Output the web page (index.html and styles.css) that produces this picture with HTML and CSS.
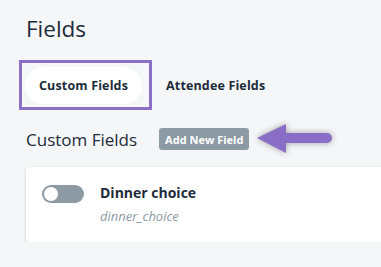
FILE: index.html
```html
<!DOCTYPE html>
<html lang="en">
<head>
    <meta charset="UTF-8">
    <title>Fields</title>
    <link rel="stylesheet" href="styles.css">
</head>
<body>
    <div class="page">
        <h1 class="title">Fields</h1>

        <div class="tabs">
            <div class="tab-outline">
                <div class="tab active">Custom Fields</div>
            </div>
            <div class="tab">Attendee Fields</div>
        </div>

        <div class="section-head">
            <h2>Custom Fields</h2>
            <button class="add-btn">Add New Field</button>
            <svg class="arrow" width="84" height="40" viewBox="0 0 84 40">
                <path d="M4 19 L33 5 L33 14 L74 14 A5 5 0 0 1 74 24 L33 24 L33 34 Z" fill="#8a6dc6"/>
            </svg>
        </div>

        <div class="card">
            <span class="toggle"><span class="knob"></span></span>
            <div class="field-info">
                <div class="field-name">Dinner choice</div>
                <div class="field-key">dinner_choice</div>
            </div>
        </div>
    </div>
</body>
</html>
```

FILE: styles.css
```css
body {
    margin: 0;
    background: #f5f6f8;
    font-family: "Open Sans", sans-serif;
    color: #1d2b3a;
}
.page {
    padding: 14px 0 0 26px;
}
.title {
    margin: 0;
    font-size: 22.5px;
    font-weight: 400;
    line-height: 30px;
}
.tabs {
    display: flex;
    align-items: center;
    margin: 16px 0 0 -7px;
}
.tab-outline {
    border: 3px solid #8b6fc6;
    padding: 4px 7px 3px 3px;
}
.tab {
    font-size: 12.5px;
    font-weight: 700;
    letter-spacing: 0.15px;
    padding: 0 14px;
    height: 37px;
    line-height: 37px;
    border-radius: 19px;
}
.tab.active {
    background: #fff;
}
.section-head {
    display: flex;
    align-items: center;
    margin-top: 16px;
    height: 26px;
}
.section-head h2 {
    margin: 0;
    font-size: 17px;
    font-weight: 400;
}
.add-btn {
    margin-left: 22px;
    background: #8c9aa3;
    color: #fff;
    border: 0;
    border-radius: 3px;
    font-family: inherit;
    font-size: 11px;
    font-weight: 700;
    height: 22px;
    padding: 0 6px;
}
.arrow {
    margin-left: 4px;
    filter: drop-shadow(0 0 3px rgba(0,0,0,0.35));
}
.card {
    display: flex;
    align-items: flex-start;
    margin-top: 15px;
    margin-right: -4px;
    background: #fff;
    border-radius: 3px;
    box-shadow: 0 1px 3px rgba(0,0,0,0.18);
    height: 75px;
    padding: 18px 0 0 16px;
    box-sizing: border-box;
}
.toggle {
    width: 42px;
    height: 18px;
    border-radius: 9px;
    background: #8c9aa3;
    position: relative;
    flex-shrink: 0;
}
.knob {
    position: absolute;
    left: 2px;
    top: 2px;
    width: 14px;
    height: 14px;
    border-radius: 50%;
    background: #fff;
}
.field-info {
    margin-left: 16px;
}
.field-name {
    font-size: 14px;
    font-weight: 700;
    line-height: 15px;
}
.field-key {
    margin-top: 7px;
    font-size: 13px;
    font-style: italic;
    color: #8c9aa3;
}
```
